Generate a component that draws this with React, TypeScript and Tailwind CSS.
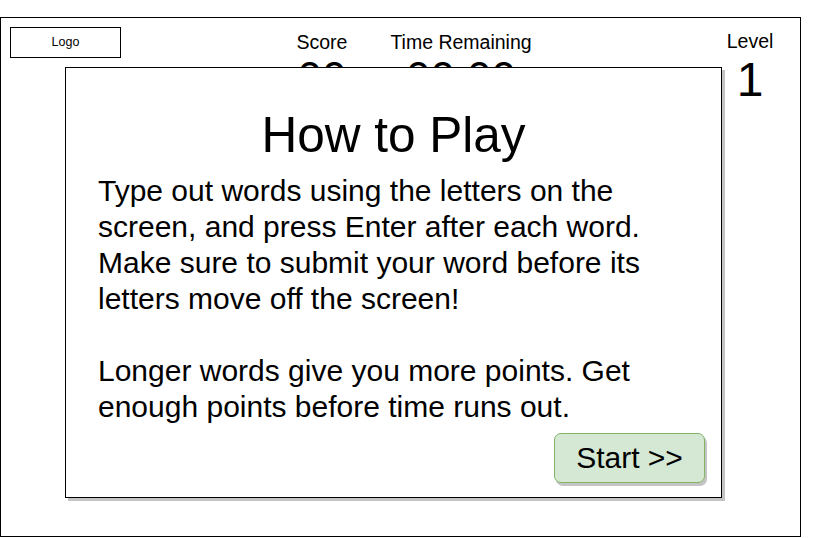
export default function App() {
  return (
    <div className="h-[538px] w-[833px] bg-white pt-[17px] font-['Liberation_Sans',Arial,sans-serif] text-black">
      <div className="relative h-[520px] w-[801px] border border-black">
        {/* header */}
        <div className="flex items-start pl-[9px] pt-[9px]">
          <div className="flex h-[31px] w-[111px] items-center justify-center border border-black text-[12.5px]">
            Logo
          </div>
          <div className="ml-[151px] flex w-[100px] flex-col items-center pt-[3px]">
            <div className="text-[19.5px] leading-[24px]">Score</div>
            <div className="mt-[2px] text-[44px] leading-none">00</div>
          </div>
          <div className="ml-[9px] flex w-[160px] flex-col items-center pt-[3px]">
            <div className="text-[19.5px] leading-[24px]">Time Remaining</div>
            <div className="mt-[2px] text-[44px] leading-none">00:00</div>
          </div>
          <div className="ml-[179px] flex w-[60px] flex-col items-center pt-[2px]">
            <div className="text-[19.5px] leading-[24px]">Level</div>
            <div className="mt-[3px] text-[48px] leading-none">1</div>
          </div>
        </div>

        {/* how to play dialog */}
        <div className="absolute left-[64px] top-[49px] flex h-[431px] w-[657px] flex-col border border-black bg-white pl-[32px] pr-[16px] pt-[37px] pb-[14px] shadow-[3px_3px_0_#c4c4c4]">
          <h1 className="pr-[16px] text-center text-[49.5px] leading-[59px]">How to Play</h1>
          <div className="mt-[9px] text-[30px] leading-[36px]">
            <p>
              Type out words using the letters on the
              <br />
              screen, and press Enter after each word.
              <br />
              Make sure to submit your word before its
              <br />
              letters move off the screen!
            </p>
            <p className="mt-[36px]">
              Longer words give you more points. Get
              <br />
              enough points before time runs out.
            </p>
          </div>
          <div className="mt-auto flex justify-end">
            <button className="h-[50px] w-[151px] rounded-[7px] border border-[#82b366] bg-[#d5e8d4] text-[30px] leading-none shadow-[2px_3px_0_#c4c4c4]">
              Start &gt;&gt;
            </button>
          </div>
        </div>
      </div>
    </div>
  )
}
